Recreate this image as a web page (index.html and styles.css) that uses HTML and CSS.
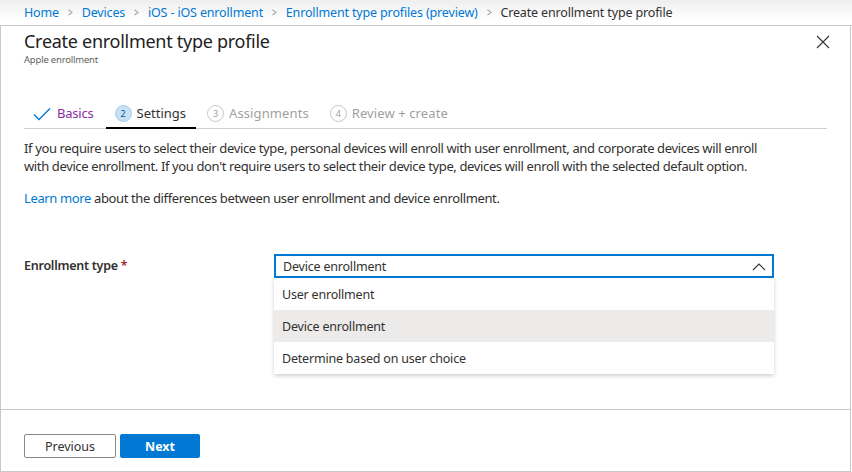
FILE: index.html
```html
<!DOCTYPE html>
<html>
<head>
<meta charset="utf-8">
<link rel="stylesheet" href="styles.css">
</head>
<body>
<div class="page">
  <nav class="crumbs">
    <a class="crumb">Home</a><span class="sep">&gt;</span>
    <a class="crumb">Devices</a><span class="sep">&gt;</span>
    <a class="crumb">iOS - iOS enrollment</a><span class="sep">&gt;</span>
    <a class="crumb">Enrollment type profiles (preview)</a><span class="sep">&gt;</span>
    <span class="crumb current">Create enrollment type profile</span>
  </nav>
  <div class="blade">
    <header class="head">
      <div>
        <h1 class="title">Create enrollment type profile</h1>
        <div class="subtitle">Apple enrollment</div>
      </div>
      <svg class="close" width="14" height="14" viewBox="0 0 14 14"><path d="M1 1L13 13M13 1L1 13" stroke="#323130" stroke-width="1.1" fill="none"/></svg>
    </header>
    <div class="tabs">
      <div class="tab done">
        <svg width="18" height="14" viewBox="0 0 18 14"><path d="M1 7.5L6 12.5L17 1.5" stroke="#0078d4" stroke-width="1.4" fill="none"/></svg>
        <span>Basics</span>
      </div>
      <div class="tab active"><span class="num">2</span><span>Settings</span></div>
      <div class="tab off"><span class="num">3</span><span>Assignments</span></div>
      <div class="tab off"><span class="num">4</span><span>Review + create</span></div>
    </div>
    <main class="content">
      <p class="desc">If you require users to select their device type, personal devices will enroll with user enrollment, and corporate devices will enroll with device enrollment. If you don't require users to select their device type, devices will enroll with the selected default option.</p>
      <p class="learn"><a class="link">Learn more</a> about the differences between user enrollment and device enrollment.</p>
      <div class="field">
        <label class="label">Enrollment type <span class="req">*</span></label>
        <div class="dropdown">
          <div class="select">
            <span>Device enrollment</span>
            <svg width="14" height="9" viewBox="0 0 14 9"><path d="M1 8L7 2L13 8" stroke="#323130" stroke-width="1.1" fill="none"/></svg>
          </div>
          <ul class="menu">
            <li class="opt">User enrollment</li>
            <li class="opt sel">Device enrollment</li>
            <li class="opt">Determine based on user choice</li>
          </ul>
        </div>
      </div>
    </main>
    <footer class="foot">
      <button class="btn prev">Previous</button>
      <button class="btn next">Next</button>
    </footer>
  </div>
</div>
</body>
</html>
```
FILE: styles.css
```css
* { box-sizing: border-box; }
html, body { margin: 0; padding: 0; background: #fff; }
body {
  font-family: "Noto Sans", "Open Sans", sans-serif;
  color: #323130;
  width: 852px;
  height: 472px;
  overflow: hidden;
}
.page { width: 852px; height: 472px; display: flex; flex-direction: column; }
.crumbs {
  height: 26px;
  flex: none;
  display: flex;
  align-items: center;
  padding-left: 24px;
  font-size: 12.5px;
  letter-spacing: -0.15px;
  background: linear-gradient(#eeeeee, #ffffff 80%);
  border-bottom: 1px solid #cccccc;
  white-space: nowrap;
}
.crumb { color: #0078d4; }
.crumb.current { color: #323130; }
.sep { color: #8a8886; margin: 0 8px; font-size: 12px; transform: scaleX(0.7); display: inline-block; }
.blade {
  flex: 1;
  display: flex;
  flex-direction: column;
  border-left: 1px solid #c8c8c8;
  border-right: 1px solid #c8c8c8;
  border-bottom: 1px solid #c8c8c8;
  margin-right: 1px;
}
.head {
  display: flex;
  justify-content: space-between;
  align-items: flex-start;
  padding: 2px 20px 0 23px;
  height: 72px;
}
.title { margin: 0; font-size: 18px; font-weight: 400; line-height: 26px; letter-spacing: -0.28px; color: #212121; }
.subtitle { font-size: 9.5px; color: #605e5c; margin-top: 0; line-height: 12px; letter-spacing: -0.2px; }
.close { margin-top: 7px; }
.tabs {
  display: flex;
  align-items: stretch;
  margin: 0 23px 0 23px;
  border-bottom: 1px solid #d0d0d0;
  height: 31px;
}
.tab {
  display: flex;
  align-items: center;
  gap: 5px;
  font-size: 13px;
  letter-spacing: 0;
  padding: 3px 10px 2px 9px;
  margin-right: 2px;
  border-bottom: 2px solid transparent;
  margin-bottom: -1px;
}
.tab.done { color: #8a2da5; padding-left: 9px; gap: 6px; letter-spacing: -0.2px; }
.tab.done svg { margin-top: 1px; }
.tab.active { border-bottom-color: #000; color: #323130; }
.tab.off { color: #a19f9d; letter-spacing: 0.1px; }
.num {
  width: 17px; height: 17px;
  border-radius: 50%;
  border: 1px solid #c8c6c4;
  font-size: 9px;
  display: inline-flex;
  align-items: center;
  justify-content: center;
  letter-spacing: 0;
}
.tab.active .num { background: #c7e0f4; border-color: #a6cdee; color: #005a9e; }
.tab.off .num { color: #a19f9d; }
.content { flex: 1; padding: 0 23px; }
.desc { margin: 10px 0 0; font-size: 13px; line-height: 18px; letter-spacing: -0.37px; max-width: 745px; }
.learn { margin: 14px 0 0; font-size: 13px; line-height: 18px; letter-spacing: -0.37px; }
.link { color: #0078d4; }
.field { display: flex; margin-top: 47px; }
.label { width: 250px; font-size: 12.5px; font-weight: 600; color: #323130; padding-top: 3px; letter-spacing: -0.25px; }
.req { color: #a4262c; }
.dropdown { width: 500px; }
.select {
  height: 24px;
  border: 2px solid #0078d4;
  display: flex;
  align-items: center;
  justify-content: space-between;
  padding: 0 6px 0 7px;
  font-size: 12.5px;
  letter-spacing: -0.2px;
}
.menu {
  list-style: none;
  margin: 0;
  padding: 0;
  box-shadow: 0 1.6px 4px rgba(0,0,0,0.18), 0 0.3px 1px rgba(0,0,0,0.1);
}
.opt { height: 32px; display: flex; align-items: center; padding-left: 8px; font-size: 12.5px; letter-spacing: -0.2px; }
.opt.sel { background: #edebe9; }
.foot {
  height: 62px;
  border-top: 1px solid #c8c8c8;
  display: flex;
  align-items: flex-start;
  padding: 24px 0 0 23px;
  gap: 4px;
}
.btn {
  height: 24px;
  font-family: inherit;
  font-size: 12.5px;
  border-radius: 2px;
  cursor: pointer;
}
.prev { width: 92px; background: #fff; border: 1px solid #8a8886; color: #323130; }
.next { width: 80px; background: #0078d4; border: 1px solid #0078d4; color: #fff; font-weight: 700; }
```
